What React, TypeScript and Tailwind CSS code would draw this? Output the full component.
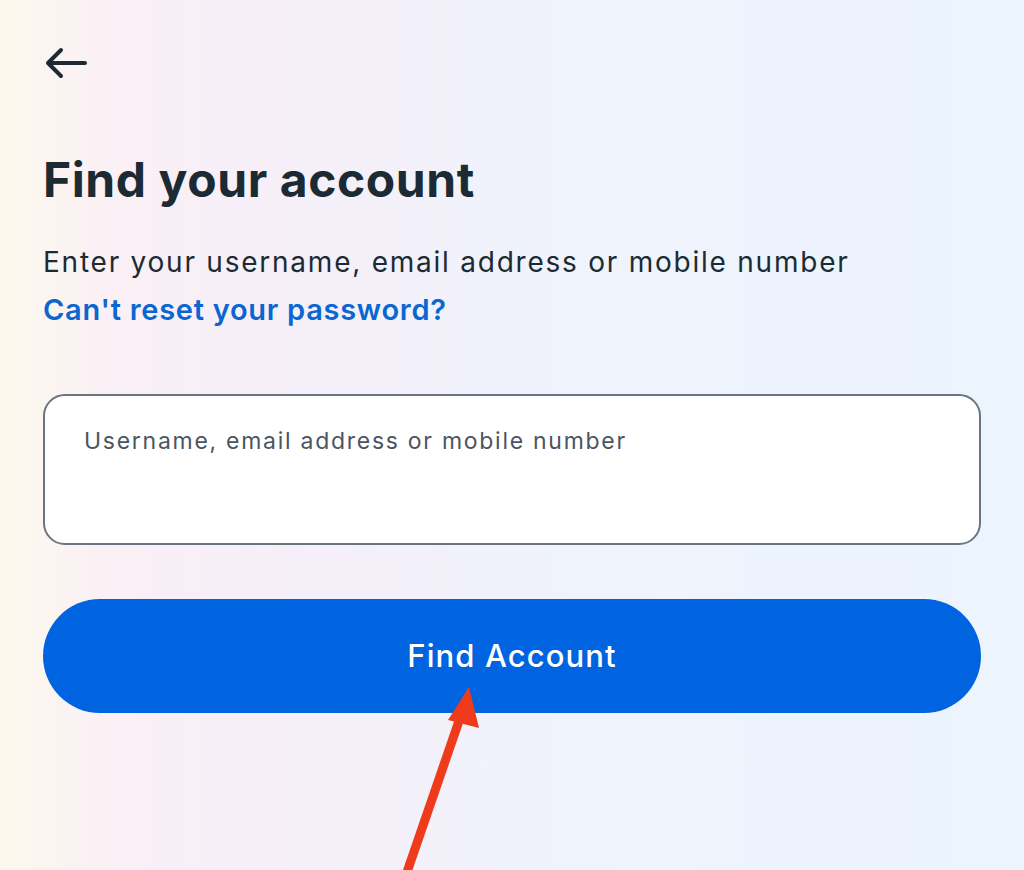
export default function App() {
  return (
    <div className="relative h-[870px] w-[1024px] overflow-hidden bg-[linear-gradient(90deg,#fdf9ee_0%,#faf0f5_10%,#f6eff9_28%,#eff3fc_55%,#ecf4fd_100%)] font-['Inter',sans-serif]">
      <div className="flex flex-col px-[43px] pt-[46px]">
        <button className="flex h-[34px] w-[50px] items-center text-[#1c2b33]">
          <svg width="44" height="32" viewBox="0 0 44 32" fill="none">
            <path d="M42 16H5M18 3L5 16L18 29" stroke="currentColor" strokeWidth="4" strokeLinecap="round" strokeLinejoin="round" />
          </svg>
        </button>

        <h1 className="mt-[72px] text-[48px] font-bold leading-[56px] tracking-[0.012em] text-[#1c2b33]">
          Find your account
        </h1>

        <p className="mt-[34px] text-[28px] leading-[40px] tracking-[0.063em] text-[#1c2b33]">
          Enter your username, email address or mobile number
        </p>
        <a className="mt-[10px] text-[29px] font-semibold leading-[36px] tracking-[0.025em] text-[#0a66d0]">
          Can't reset your password?
        </a>

        <div className="mt-[66px] h-[151px] rounded-[22px] border-2 border-[#6b7480] bg-white px-[39px] pt-[28px]">
          <span className="text-[23px] tracking-[0.075em] text-[#4b5563]">Username, email address or mobile number</span>
        </div>

        <button className="mt-[54px] flex h-[114px] items-center justify-center rounded-full bg-[#0064e0] text-[31px] font-medium tracking-[0.035em] text-white">
          Find Account
        </button>
      </div>

      <svg className="absolute left-0 top-0" width="1024" height="870" viewBox="0 0 1024 870">
        <line x1="406" y1="875" x2="460" y2="718" stroke="#ef3b1c" strokeWidth="9" />
        <polygon points="469,687 448,720 479,728" fill="#ef3b1c" />
      </svg>
    </div>
  );
}
